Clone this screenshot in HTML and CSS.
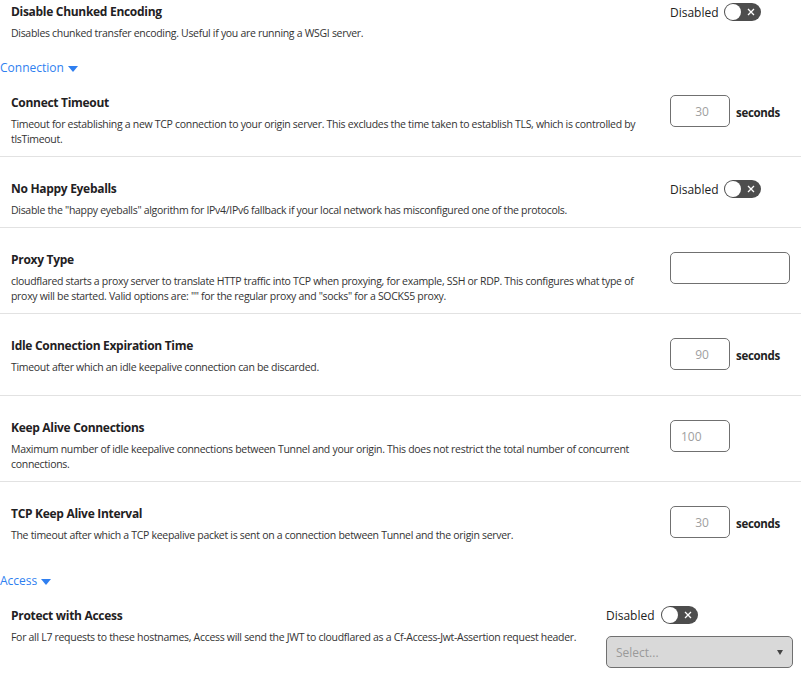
FILE: index.html
```html
<!DOCTYPE html>
<html lang="en">
<head>
    <meta charset="UTF-8">
    <meta name="viewport" content="width=device-width, initial-scale=1.0">
    <title>Tunnel Origin Settings</title>
    <link rel="stylesheet" href="styles.css">
</head>
<body>
    <div class="settings">
        <div class="row row-end">
            <div class="row-text">
                <div class="row-title">Disable Chunked Encoding</div>
                <div class="row-desc">Disables chunked transfer encoding. Useful if you are running a WSGI server.</div>
            </div>
            <div class="row-control toggle-control">
                <span class="toggle-label">Disabled</span>
                <span class="toggle"><span class="knob"></span><svg class="cross" width="8" height="8" viewBox="0 0 8 8"><path d="M1 1L7 7M7 1L1 7" stroke="#fff" stroke-width="1.3" fill="none"/></svg></span>
            </div>
        </div>

        <div class="section-toggle">Connection <span class="caret"></span></div>

        <div class="row">
            <div class="row-text">
                <div class="row-title">Connect Timeout</div>
                <div class="row-desc">Timeout for establishing a new TCP connection to your origin server. This excludes the time taken to establish TLS, which is controlled by tlsTimeout.</div>
            </div>
            <div class="row-control input-control">
                <input class="num-input" type="text" placeholder="30">
                <span class="unit">seconds</span>
            </div>
        </div>

        <div class="row">
            <div class="row-text">
                <div class="row-title">No Happy Eyeballs</div>
                <div class="row-desc">Disable the "happy eyeballs" algorithm for IPv4/IPv6 fallback if your local network has misconfigured one of the protocols.</div>
            </div>
            <div class="row-control toggle-control">
                <span class="toggle-label">Disabled</span>
                <span class="toggle"><span class="knob"></span><svg class="cross" width="8" height="8" viewBox="0 0 8 8"><path d="M1 1L7 7M7 1L1 7" stroke="#fff" stroke-width="1.3" fill="none"/></svg></span>
            </div>
        </div>

        <div class="row">
            <div class="row-text">
                <div class="row-title">Proxy Type</div>
                <div class="row-desc">cloudflared starts a proxy server to translate HTTP traffic into TCP when proxying, for example, SSH or RDP. This configures what type of proxy will be started. Valid options are: "" for the regular proxy and "socks" for a SOCKS5 proxy.</div>
            </div>
            <div class="row-control input-control">
                <input class="text-input wide" type="text">
            </div>
        </div>

        <div class="row">
            <div class="row-text">
                <div class="row-title">Idle Connection Expiration Time</div>
                <div class="row-desc">Timeout after which an idle keepalive connection can be discarded.</div>
            </div>
            <div class="row-control input-control">
                <input class="num-input" type="text" placeholder="90">
                <span class="unit">seconds</span>
            </div>
        </div>

        <div class="row">
            <div class="row-text">
                <div class="row-title">Keep Alive Connections</div>
                <div class="row-desc">Maximum number of idle keepalive connections between Tunnel and your origin. This does not restrict the total number of concurrent connections.</div>
            </div>
            <div class="row-control input-control">
                <input class="text-input" type="text" placeholder="100">
            </div>
        </div>

        <div class="row row-end">
            <div class="row-text">
                <div class="row-title">TCP Keep Alive Interval</div>
                <div class="row-desc">The timeout after which a TCP keepalive packet is sent on a connection between Tunnel and the origin server.</div>
            </div>
            <div class="row-control input-control">
                <input class="num-input" type="text" placeholder="30">
                <span class="unit">seconds</span>
            </div>
        </div>

        <div class="section-toggle">Access <span class="caret"></span></div>

        <div class="row row-end row-access">
            <div class="row-text">
                <div class="row-title">Protect with Access</div>
                <div class="row-desc">For all L7 requests to these hostnames, Access will send the JWT to cloudflared as a Cf-Access-Jwt-Assertion request header.</div>
            </div>
            <div class="row-control access-control">
                <div class="toggle-line">
                    <span class="toggle-label">Disabled</span>
                    <span class="toggle"><span class="knob"></span><svg class="cross" width="8" height="8" viewBox="0 0 8 8"><path d="M1 1L7 7M7 1L1 7" stroke="#fff" stroke-width="1.3" fill="none"/></svg></span>
                </div>
                <div class="select-box">
                    <span>Select...</span>
                    <span class="select-arrow"></span>
                </div>
            </div>
        </div>
    </div>
</body>
</html>
```

FILE: styles.css
```css
body {
    margin: 0;
    background-color: #fff;
    font-family: 'Open Sans', 'Noto Sans', sans-serif;
    color: #222;
    overflow: hidden;
}

.settings {
    margin-top: -20px;
}

.row {
    display: flex;
    gap: 19px;
    padding: 0 11px;
    border-bottom: 1px solid #e2e2e2;
}

.row-end {
    border-bottom: none;
}

.row-text {
    flex: 0 0 640px;
    padding: 22px 0 9px;
}

.row-title {
    font-size: 12px;
    font-weight: 700;
    line-height: 20px;
    margin-bottom: 4px;
    color: #1f2123;
    letter-spacing: -0.3px;
}

.row-desc {
    font-size: 10.5px;
    line-height: 15px;
    color: #333;
    letter-spacing: -0.3px;
}

.row-control {
    display: flex;
}

.toggle-control {
    padding-top: 23px;
    align-items: flex-start;
    gap: 5px;
}

.input-control {
    height: 32px;
    padding: 24px 0 25px;
    align-items: flex-start;
    gap: 6px;
}

.toggle-label {
    font-size: 12px;
    line-height: 20px;
    color: #222;
}

.toggle {
    position: relative;
    display: inline-block;
    width: 37px;
    height: 18px;
    border-radius: 9px;
    background-color: #4d4d4d;
}

.knob {
    position: absolute;
    left: 1px;
    top: 1px;
    width: 16px;
    height: 16px;
    border-radius: 50%;
    background-color: #fff;
}

.cross {
    position: absolute;
    right: 6px;
    top: 5px;
}

input {
    box-sizing: border-box;
    height: 32px;
    border: 1px solid #707070;
    border-radius: 5px;
    font-family: inherit;
    font-size: 12px;
    color: #333;
    outline: none;
}

input::placeholder {
    color: #a0a0a0;
}

.num-input {
    width: 60px;
    padding: 0 20px 0 24px;
    text-align: center;
}

.text-input {
    width: 60px;
    padding: 0 10px;
}

.text-input.wide {
    width: 120px;
}

.unit {
    padding-top: 3px;
    font-size: 11.5px;
    font-weight: 700;
    line-height: 29px;
    letter-spacing: -0.3px;
    color: #222;
}

.section-toggle {
    margin: 9px 0 -6px;
    font-size: 12px;
    line-height: 18px;
    color: #2f7ff0;
}

.caret {
    display: inline-block;
    width: 0;
    height: 0;
    border-left: 5px solid transparent;
    border-right: 5px solid transparent;
    border-top: 6px solid #2f7ff0;
    vertical-align: middle;
    margin-left: 1px;
}

.row-access .row-text {
    flex-basis: 576px;
    padding-bottom: 20px;
}

.access-control {
    flex-direction: column;
    align-items: flex-start;
    padding-top: 22px;
    width: 187px;
    gap: 10px;
}

.toggle-line {
    display: flex;
    gap: 6px;
}

.select-box {
    box-sizing: border-box;
    width: 187px;
    height: 32px;
    display: flex;
    align-items: center;
    justify-content: space-between;
    padding: 0 9px;
    background-color: #d9d9d9;
    border: 1px solid #707070;
    border-radius: 5px;
    font-size: 12px;
    color: #9a9a9a;
}

.select-arrow {
    width: 0;
    height: 0;
    border-left: 3.5px solid transparent;
    border-right: 3.5px solid transparent;
    border-top: 5px solid #444;
}
```
